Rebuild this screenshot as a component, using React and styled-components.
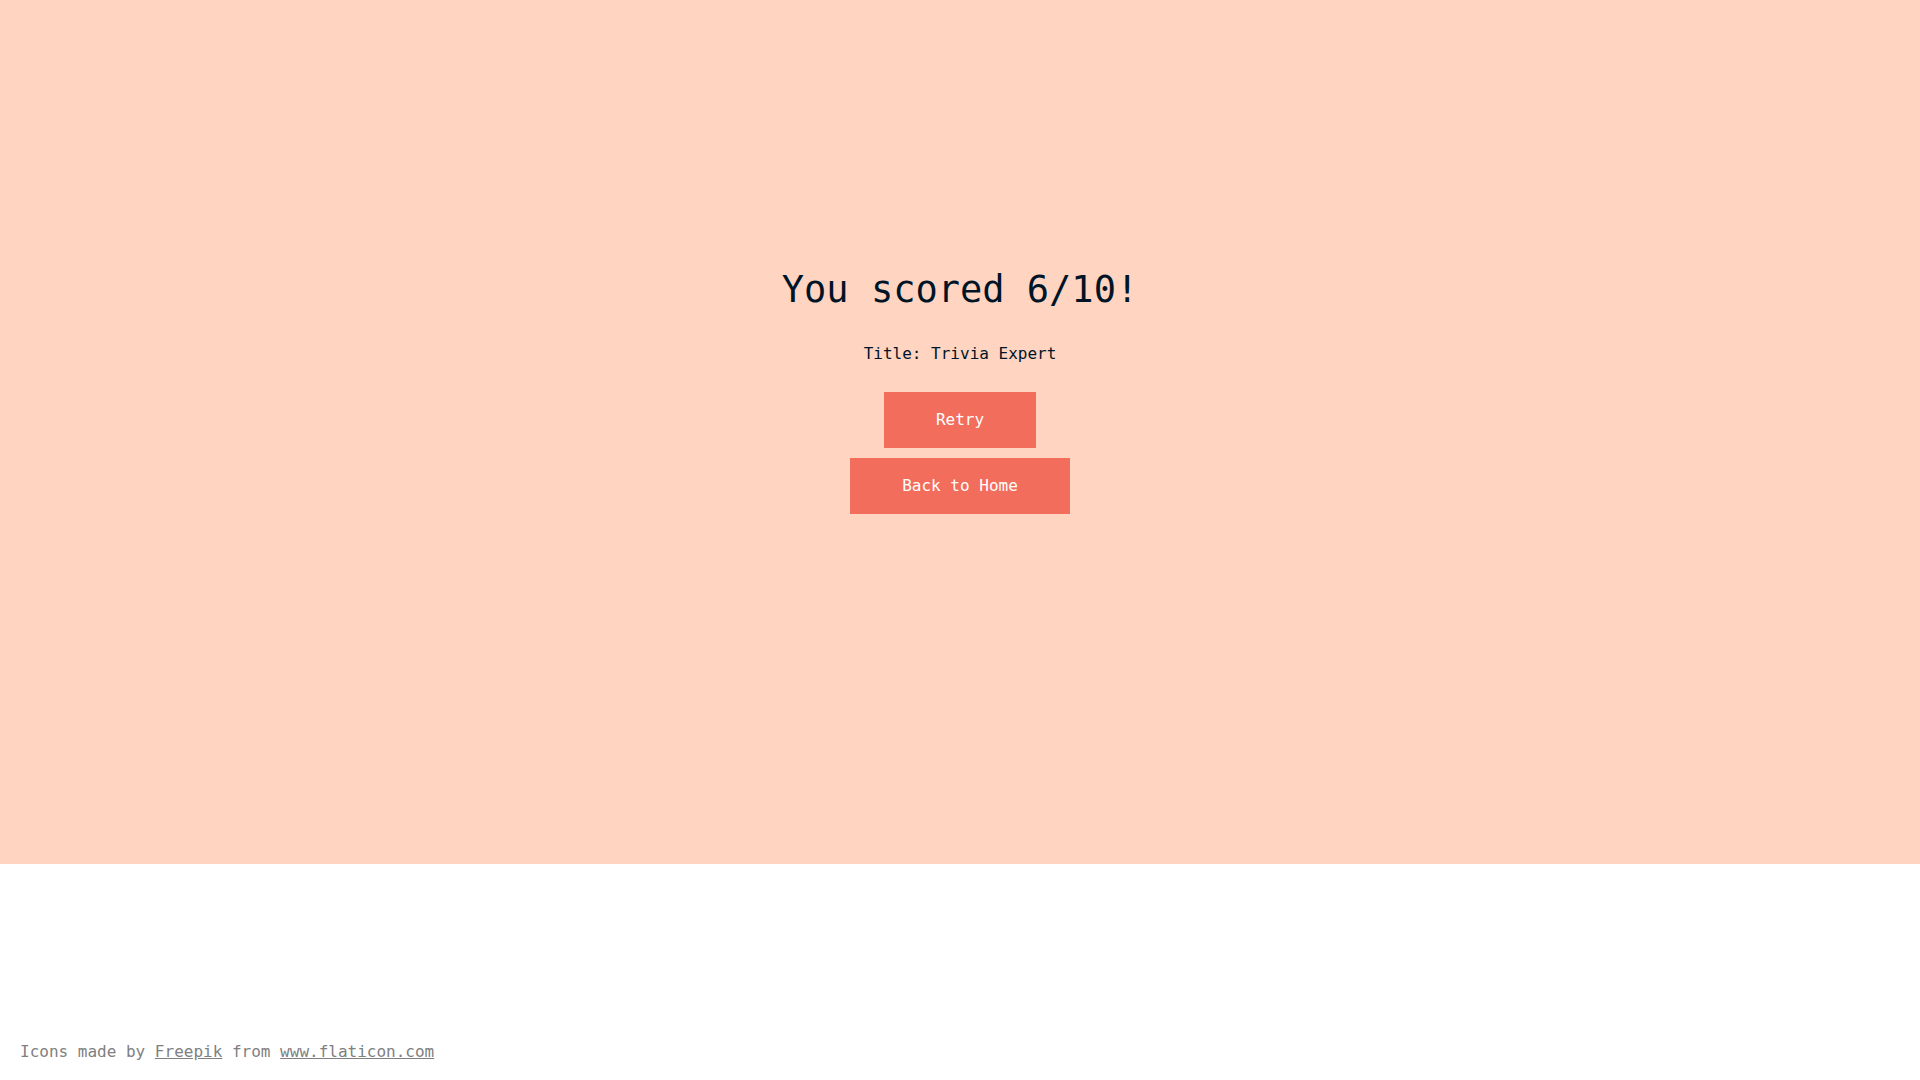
import React from "react";
import styled, { createGlobalStyle } from "styled-components";

const GlobalStyle = createGlobalStyle`
  *, *::before, *::after {
    box-sizing: border-box;
  }

  body {
    margin: 0;
    background: #ffffff;
    color: #001427;
    font-family: "DejaVu Sans Mono", "Liberation Mono", monospace;
    font-size: 16px;
    line-height: 24px;
  }
`;

const Page = styled.div`
  display: flex;
  flex-direction: column;
  min-height: 100vh;
`;

const Result = styled.main`
  display: flex;
  flex-direction: column;
  align-items: center;
  justify-content: center;
  min-height: 80vh;
  padding: 20px 20px 104px;
  background: #ffd4c0;
  text-align: center;
`;

const Score = styled.h1`
  margin: 0 0 28px;
  font-size: 37px;
  font-weight: 400;
  line-height: 48px;
`;

const Rank = styled.p`
  margin: 0 0 26px;
`;

const Actions = styled.div`
  display: flex;
  flex-direction: column;
  align-items: center;
  gap: 10px;
`;

const Button = styled.button`
  padding: 16px 52px;
  border: 0;
  background: #f26d5b;
  color: #ffffff;
  font: inherit;
  cursor: pointer;
`;

const Footer = styled.footer`
  margin-top: auto;
  padding: 16px 20px;
  color: #808080;
`;

const CreditLink = styled.a`
  color: inherit;
  text-decoration: underline;
`;

export default function App() {
  const score = 6;
  const total = 10;

  return (
    <Page>
      <GlobalStyle />
      <Result>
        <Score>{`You scored ${score}/${total}!`}</Score>
        <Rank>Title: Trivia Expert</Rank>
        <Actions>
          <Button type="button">Retry</Button>
          <Button type="button">Back to Home</Button>
        </Actions>
      </Result>
      <Footer>
        Icons made by <CreditLink href="#freepik">Freepik</CreditLink> from{" "}
        <CreditLink href="#flaticon">www.flaticon.com</CreditLink>
      </Footer>
    </Page>
  );
}
